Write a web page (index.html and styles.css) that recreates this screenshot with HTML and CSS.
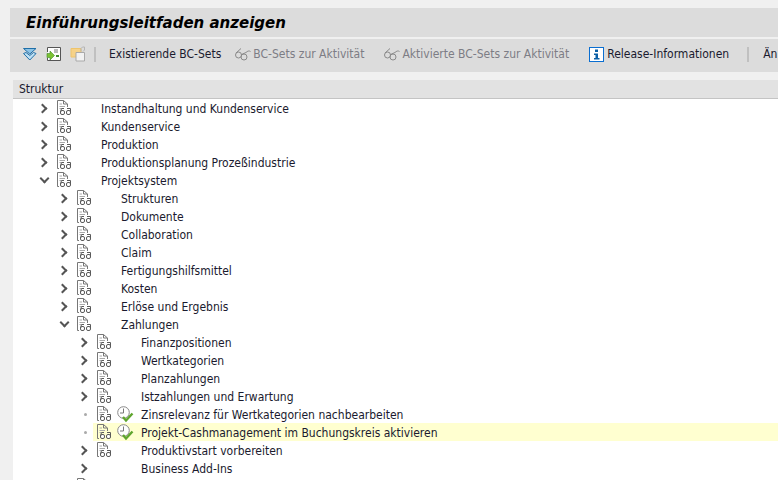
FILE: index.html
```html
<!DOCTYPE html>
<html lang="de">
<head>
<meta charset="utf-8">
<title>Einführungsleitfaden anzeigen</title>
<link rel="stylesheet" href="styles.css">
</head>
<body>
<svg class="defs" width="0" height="0">
  <symbol id="doc" viewBox="0 0 16 18">
    <path d="M.5 15.5V1.5H6.5L10.5 5V8M6.5 1.5V5H10.5" fill="none" stroke="#777"/>
    <path d="M2.5 5H5M2.5 7.5H8M2.5 9.5H4" stroke="#aaa"/>
    <path d="M.5 15.5H2" fill="none" stroke="#777"/>
    <rect x="3.5" y="11.5" width="4" height="4" rx="1.5" fill="#fff" stroke="#5a5a5a"/>
    <path d="M3.5 13L4.5 9.5H7" fill="none" stroke="#5a5a5a"/>
    <rect x="9.5" y="11.5" width="4" height="4" rx="1.5" fill="#fff" stroke="#5a5a5a"/>
    <path d="M13.5 13V9.5H10" fill="none" stroke="#5a5a5a"/>
  </symbol>
  <symbol id="clock" viewBox="0 0 17 17">
    <circle cx="6.5" cy="6.5" r="5.8" fill="#fff" stroke="#888"/>
    <path d="M6.5 2.5V7H3" fill="none" stroke="#777"/>
    <path d="M6 11L9 14.5L15.5 7.5" fill="none" stroke="#5fa52e" stroke-width="2.4"/>
  </symbol>
  <symbol id="glasses" viewBox="0 0 17 14">
    <circle cx="4.5" cy="8" r="3" fill="none" stroke="#8a8a8a"/>
    <circle cx="10" cy="10" r="3" fill="none" stroke="#8a8a8a"/>
    <path d="M2 6L7 1.5M7.5 7.5L12 5.5C13.5 4 15 3.5 16.5 4.5" fill="none" stroke="#8a8a8a"/>
  </symbol>
</svg>
<div class="screen">
  <header class="titlebar"><h1>Einführungsleitfaden anzeigen</h1></header>
  <nav class="toolbar">
    <svg class="tool-icon" width="16" height="16" viewBox="0 0 16 16"><path d="M1.5 2.5H14L7.8 8Z" fill="#8cc3e6" stroke="#1f6fa8"/><path d="M1.5 7.5L4 6.5L7.8 9.5L11.5 6.5L14 7.5L7.8 14Z" fill="#bfe0f4" stroke="#1f6fa8"/></svg>
    <svg class="tool-icon" width="16" height="16" viewBox="0 0 16 16"><path d="M1.5 6V1.5H14.5V14.5H1.5V12" fill="#fff" stroke="#555"/><path d="M8 4H12M8 6H12" stroke="#777"/><path d="M10 10H13" stroke="#3f8a2c" stroke-width="2"/><path d="M1 7.5H4V5L8.5 9.5L4 14V11.5H1Z" fill="#7cc233" stroke="#3f8a2c" stroke-width=".6"/></svg>
    <svg class="tool-icon" width="16" height="16" viewBox="0 0 16 16"><path d="M1 2.5H11V11H1Z" fill="#f6d288" stroke="#eec46c"/><path d="M6 6.5H14.5V15H6Z" fill="#f2f2f2" stroke="#a9a9a9"/><path d="M11 5.5V2.5L12.5 1H14.5V4L13 5.5" fill="none" stroke="#b5b5b5"/></svg>
    <span class="sep first"></span>
    <span class="tool">Existierende BC-Sets</span>
    <span class="tool off gap-a"><svg class="glasses" width="17" height="14"><use href="#glasses"/></svg>BC-Sets zur Aktivität</span>
    <span class="tool off gap-b"><svg class="glasses" width="17" height="14"><use href="#glasses"/></svg>Aktivierte BC-Sets zur Aktivität</span>
    <span class="tool gap-c"><svg class="info" width="15" height="15" viewBox="0 0 15 15"><rect x=".5" y=".5" width="14" height="14" fill="#fff" stroke="#0a6ed1"/><path d="M6 2.5H9V5H6ZM5 6.5H9V11H10.5V12.5H5V11H6.5V8H5Z" fill="#0b5fa5"/></svg>Release-Informationen</span>
    <span class="sep second"></span>
    <span class="tool last">Än</span>
  </nav>
  <section class="tree">
    <div class="tree-head">Struktur</div>
    <div class="row l0"><i class="arrow"></i><svg class="doc"><use href="#doc"/></svg><span class="label">Instandhaltung und Kundenservice</span></div>
    <div class="row l0"><i class="arrow"></i><svg class="doc"><use href="#doc"/></svg><span class="label">Kundenservice</span></div>
    <div class="row l0"><i class="arrow"></i><svg class="doc"><use href="#doc"/></svg><span class="label">Produktion</span></div>
    <div class="row l0"><i class="arrow"></i><svg class="doc"><use href="#doc"/></svg><span class="label">Produktionsplanung Prozeßindustrie</span></div>
    <div class="row l0"><i class="arrow open"></i><svg class="doc"><use href="#doc"/></svg><span class="label">Projektsystem</span></div>
    <div class="row l1"><i class="arrow"></i><svg class="doc"><use href="#doc"/></svg><span class="label">Strukturen</span></div>
    <div class="row l1"><i class="arrow"></i><svg class="doc"><use href="#doc"/></svg><span class="label">Dokumente</span></div>
    <div class="row l1"><i class="arrow"></i><svg class="doc"><use href="#doc"/></svg><span class="label">Collaboration</span></div>
    <div class="row l1"><i class="arrow"></i><svg class="doc"><use href="#doc"/></svg><span class="label">Claim</span></div>
    <div class="row l1"><i class="arrow"></i><svg class="doc"><use href="#doc"/></svg><span class="label">Fertigungshilfsmittel</span></div>
    <div class="row l1"><i class="arrow"></i><svg class="doc"><use href="#doc"/></svg><span class="label">Kosten</span></div>
    <div class="row l1"><i class="arrow"></i><svg class="doc"><use href="#doc"/></svg><span class="label">Erlöse und Ergebnis</span></div>
    <div class="row l1"><i class="arrow open"></i><svg class="doc"><use href="#doc"/></svg><span class="label">Zahlungen</span></div>
    <div class="row l2"><i class="arrow"></i><svg class="doc"><use href="#doc"/></svg><span class="label">Finanzpositionen</span></div>
    <div class="row l2"><i class="arrow"></i><svg class="doc"><use href="#doc"/></svg><span class="label">Wertkategorien</span></div>
    <div class="row l2"><i class="arrow"></i><svg class="doc"><use href="#doc"/></svg><span class="label">Planzahlungen</span></div>
    <div class="row l2"><i class="arrow"></i><svg class="doc"><use href="#doc"/></svg><span class="label">Istzahlungen und Erwartung</span></div>
    <div class="row l2"><i class="bullet"></i><svg class="doc"><use href="#doc"/></svg><svg class="clock"><use href="#clock"/></svg><span class="label short">Zinsrelevanz für Wertkategorien nachbearbeiten</span></div>
    <div class="row l2"><i class="bullet"></i><div class="hl"><svg class="doc"><use href="#doc"/></svg><svg class="clock"><use href="#clock"/></svg><span class="label short">Projekt-Cashmanagement im Buchungskreis aktivieren</span></div></div>
    <div class="row l2"><i class="arrow"></i><svg class="doc"><use href="#doc"/></svg><span class="label">Produktivstart vorbereiten</span></div>
    <div class="row l2"><i class="arrow"></i><span class="nodoc"></span><span class="label">Business Add-Ins</span></div>
    <div class="row l1"><i class="blank"></i><svg class="doc"><use href="#doc"/></svg></div>
  </section>
</div>
</body>
</html>
```
FILE: styles.css
```css
html, body { margin: 0; padding: 0; }
body {
  width: 778px;
  height: 480px;
  overflow: hidden;
  background: #f0f0f0;
  font-family: "DejaVu Sans Condensed", "DejaVu Sans", sans-serif;
  font-size: 12px;
  color: #1a1a2e;
}
.defs { position: absolute; }
.screen { padding: 8px 0 0 10px; display: flex; flex-direction: column; }
.titlebar {
  height: 29px;
  background: #dcdcdc;
  display: flex;
  align-items: center;
  padding-left: 16px;
}
h1 {
  margin: 0;
  font-family: "DejaVu Sans", sans-serif;
  font-size: 15px;
  font-style: italic;
  font-weight: 700;
  color: #000;
}
.toolbar {
  margin-top: 2px;
  height: 33px;
  box-sizing: border-box;
  padding: 0 0 3px 12px;
  background: #dcdcdc;
  display: flex;
  align-items: center;
  white-space: nowrap;
  overflow: hidden;
}
.tool-icon { margin-right: 8px; flex: none; }
.sep { width: 2px; height: 15px; background: #c0c0c0; flex: none; }
.sep.first { margin: 0 13px 0 0; }
.sep.second { margin-left: 18px; }
.tool { display: inline-flex; align-items: center; }
.tool.off { color: #7d7d85; }
.gap-a { margin-left: 13px; }
.gap-b { margin-left: 19px; }
.gap-c { margin-left: 20px; }
.last { margin-left: 14px; }
.glasses { margin-right: 2px; flex: none; }
.info { margin-right: 3px; flex: none; }
.tree { margin: 8px 0 0 3px; background: #fff; }
.tree-head {
  height: 18px;
  line-height: 19px;
  background: #e2e2e2;
  border-bottom: 1px solid #c4c4c4;
  padding-left: 6px;
}
.row { height: 18px; display: flex; align-items: center; white-space: nowrap; }
.l0 { padding-left: 25px; }
.l1 { padding-left: 45px; }
.l2 { padding-left: 65px; }
.arrow, .bullet, .blank { width: 19px; height: 18px; flex: none; position: relative; }
.arrow::before {
  content: "";
  position: absolute;
  left: 1px;
  top: 6px;
  width: 5px;
  height: 5px;
  border-top: 2px solid #555;
  border-right: 2px solid #555;
  transform: rotate(45deg);
}
.arrow.open::before { left: 3px; top: 4px; transform: rotate(135deg); }
.bullet::before {
  content: "";
  position: absolute;
  left: 6px;
  top: 8px;
  width: 3px;
  height: 3px;
  border-radius: 50%;
  background: #aaa;
}
.doc { width: 16px; height: 18px; flex: none; }
.nodoc { width: 16px; flex: none; }
.clock { width: 17px; height: 17px; flex: none; margin-left: 4px; }
.label { margin-left: 28px; padding-top: 2px; }
.label.short { margin-left: 7px; }
.hl { flex: 1; height: 18px; background: #ffffd0; display: flex; align-items: center; margin-left: -4px; padding-left: 4px; }
```
